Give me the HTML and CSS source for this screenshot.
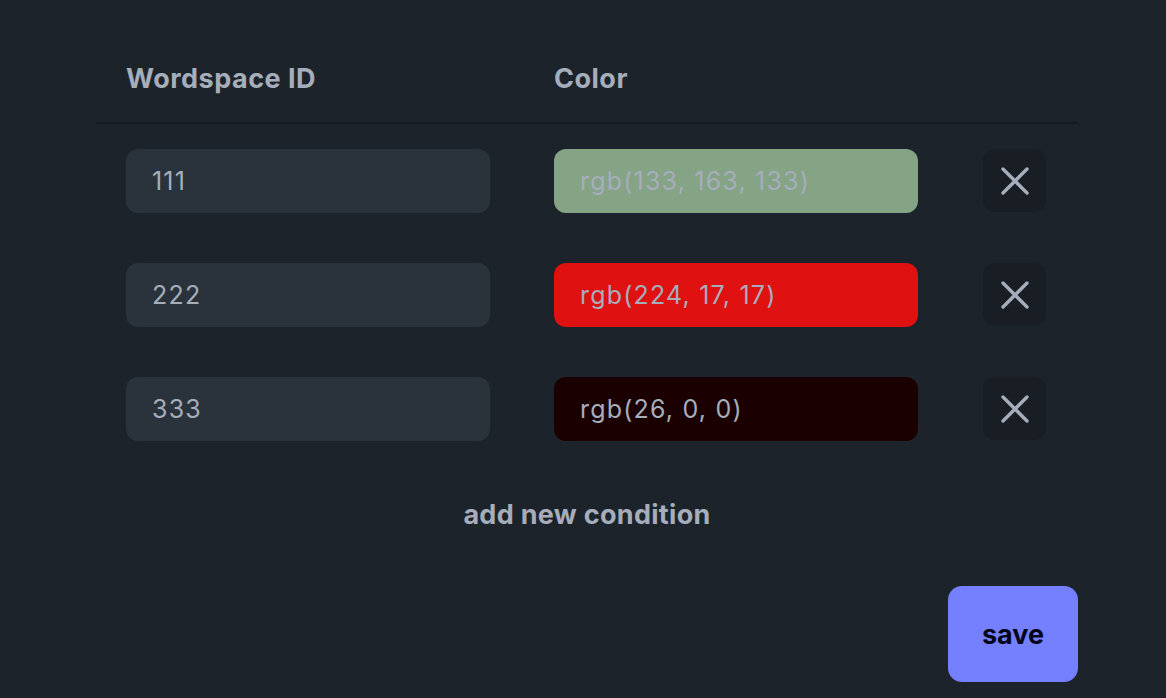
FILE: index.html
```html
<!DOCTYPE html>
<html lang="en">
<head>
<meta charset="utf-8">
<title>Conditions</title>
<link rel="stylesheet" href="styles.css">
</head>
<body>
<main class="panel">
  <div class="table">
    <div class="thead">
      <div class="th">Wordspace ID</div>
      <div class="th">Color</div>
      <div class="th"></div>
    </div>
    <div class="row">
      <input class="input" type="text" value="111">
      <input class="input color" type="text" value="rgb(133, 163, 133)" style="background-color: rgb(133, 163, 133)">
      <button class="remove" type="button" aria-label="remove">
        <svg viewBox="0 0 28 28" width="28" height="28"><path d="M2 2L26 26M26 2L2 26" stroke="currentColor" stroke-width="3.4" stroke-linecap="round" fill="none"/></svg>
      </button>
    </div>
    <div class="row">
      <input class="input" type="text" value="222">
      <input class="input color" type="text" value="rgb(224, 17, 17)" style="background-color: rgb(224, 17, 17)">
      <button class="remove" type="button" aria-label="remove">
        <svg viewBox="0 0 28 28" width="28" height="28"><path d="M2 2L26 26M26 2L2 26" stroke="currentColor" stroke-width="3.4" stroke-linecap="round" fill="none"/></svg>
      </button>
    </div>
    <div class="row">
      <input class="input" type="text" value="333">
      <input class="input color" type="text" value="rgb(26, 0, 0)" style="background-color: rgb(26, 0, 0)">
      <button class="remove" type="button" aria-label="remove">
        <svg viewBox="0 0 28 28" width="28" height="28"><path d="M2 2L26 26M26 2L2 26" stroke="currentColor" stroke-width="3.4" stroke-linecap="round" fill="none"/></svg>
      </button>
    </div>
  </div>
  <div class="add">
    <button class="add-btn" type="button">add new condition</button>
  </div>
  <div class="actions">
    <button class="save" type="button">save</button>
  </div>
</main>
</body>
</html>
```
FILE: styles.css
```css
* { box-sizing: border-box; }
html, body {
  margin: 0;
  padding: 0;
  background: #1d232a;
  color: #a6adbb;
  font-family: Inter, "Noto Sans", sans-serif;
}
.panel {
  width: 982px;
  margin-left: 96px;
}
.thead, .row {
  display: grid;
  grid-template-columns: 364px 364px 63px;
  column-gap: 64px;
  padding-left: 30px;
}
.thead {
  padding-top: 63px;
  padding-bottom: 27px;
  border-bottom: 2px solid #171b21;
}
.th {
  font-size: 27px;
  font-weight: 700;
  letter-spacing: 0.5px;
  line-height: 32px;
  color: #a6adbb;
  padding-left: 0;
}
.row {
  padding-top: 25px;
  padding-bottom: 25px;
  align-items: start;
}
.row .remove { margin-left: 1px; }
.input {
  height: 64px;
  width: 364px;
  border: none;
  outline: none;
  border-radius: 12px;
  background: #2a323c;
  color: #a6adbb;
  font-family: inherit;
  font-size: 25px;
  letter-spacing: 1.2px;
  padding: 0 0 0 26px;
}
.remove {
  width: 63px;
  height: 63px;
  border: none;
  border-radius: 12px;
  background: #191e24;
  color: #a6adbb;
  display: flex;
  align-items: center;
  justify-content: center;
  padding: 0;
}
.add {
  display: flex;
  justify-content: center;
  padding-top: 29px;
}
.add-btn {
  background: none;
  border: none;
  font-family: inherit;
  font-size: 27px;
  font-weight: 700;
  letter-spacing: 0.3px;
  color: #a6adbb;
  padding: 0;
  line-height: 40px;
  margin-left: 0;
}
.actions {
  display: flex;
  justify-content: flex-end;
  padding-top: 51px;
}
.save {
  width: 130px;
  height: 96px;
  border: none;
  border-radius: 14px;
  background: #7480ff;
  color: #050617;
  font-family: inherit;
  font-size: 27px;
  font-weight: 700;
}
```
